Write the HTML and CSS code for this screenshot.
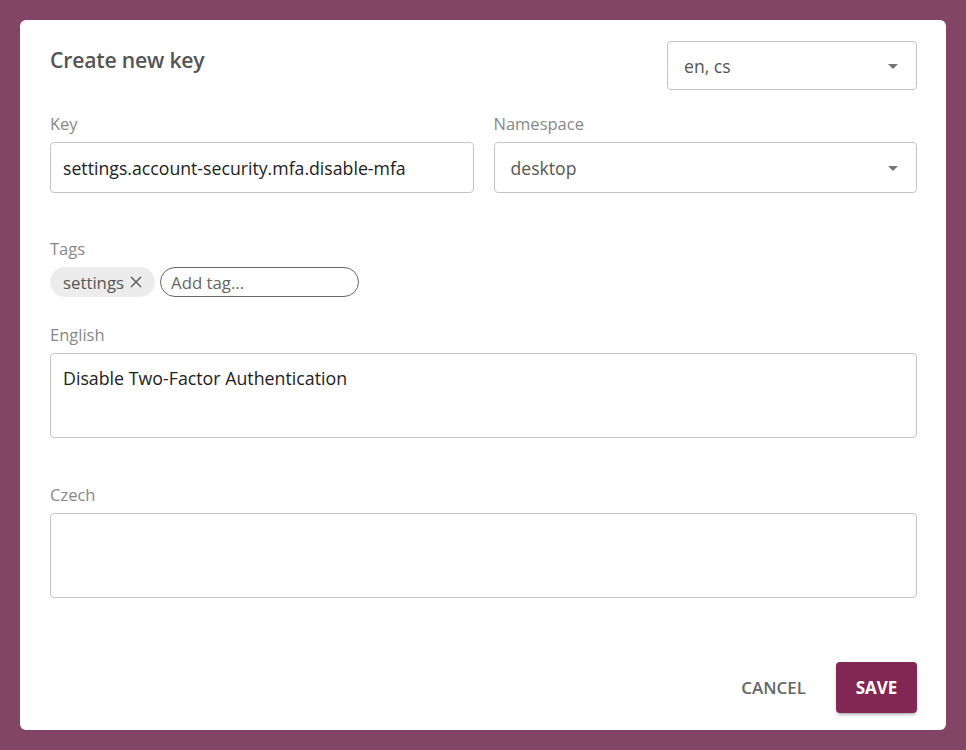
FILE: index.html
```html
<!DOCTYPE html>
<html>
<head>
<meta charset="utf-8">
<link rel="stylesheet" href="styles.css">
</head>
<body>
<div class="dialog">
  <div class="header">
    <h2 class="title">Create new key</h2>
    <div class="select lang">
      <span>en, cs</span>
      <svg class="arrow" width="24" height="24" viewBox="0 0 24 24"><path d="M7 10l5 5 5-5z" fill="#757575"/></svg>
    </div>
  </div>
  <div class="row">
    <div class="field">
      <div class="label">Key</div>
      <div class="input">settings.account-security.mfa.disable-mfa</div>
    </div>
    <div class="field">
      <div class="label">Namespace</div>
      <div class="select ns">
        <span>desktop</span>
        <svg class="arrow" width="24" height="24" viewBox="0 0 24 24"><path d="M7 10l5 5 5-5z" fill="#757575"/></svg>
      </div>
    </div>
  </div>
  <div class="tags-block">
    <div class="label">Tags</div>
    <div class="tags">
      <span class="chip">settings <svg width="14" height="14" viewBox="0 0 14 14"><path d="M2 2L12 12M12 2L2 12" stroke="#555" stroke-width="1.4"/></svg></span>
      <span class="tag-input">Add tag...</span>
    </div>
  </div>
  <div class="trans">
    <div class="label">English</div>
    <div class="textarea">Disable Two-Factor Authentication</div>
  </div>
  <div class="trans czech">
    <div class="label">Czech</div>
    <div class="textarea"></div>
  </div>
  <div class="actions">
    <span class="cancel">CANCEL</span>
    <span class="save">SAVE</span>
  </div>
</div>
</body>
</html>
```
FILE: styles.css
```css
* { box-sizing: border-box; }
html, body { margin: 0; padding: 0; }
body {
  background: #834565;
  width: 966px;
  height: 750px;
  padding: 20px;
  font-family: "Open Sans", "Noto Sans", sans-serif;
  color: #333;
}
.dialog {
  background: #fff;
  border-radius: 6px;
  width: 926px;
  height: 710px;
  padding: 21px 29px 0 30px;
  display: flex;
  flex-direction: column;
}
.header {
  display: flex;
  justify-content: space-between;
  align-items: flex-start;
}
.title {
  margin: 0;
  padding-top: 4px;
  font-size: 21.2px;
  font-weight: 600;
  color: #555;
  letter-spacing: -0.2px;
}
.select {
  border: 1px solid #c4c4c4;
  border-radius: 4px;
  display: flex;
  align-items: center;
  justify-content: space-between;
  padding: 0 11px 0 16px;
  font-size: 17.6px;
  color: #555;
}
.lang { width: 250px; height: 49px; }
.ns { height: 51px; }
.arrow { flex: none; }
.row {
  display: grid;
  grid-template-columns: 1fr 1fr;
  gap: 20px;
  margin-top: 23px;
}
.label {
  font-size: 16.5px;
  color: #888;
  line-height: 22px;
  margin-bottom: 7px;
}
.input {
  border: 1px solid #c4c4c4;
  border-radius: 4px;
  height: 51px;
  display: flex;
  align-items: center;
  padding: 0 12px;
  font-size: 17.7px;
  color: #222;
  white-space: nowrap;
}
.tags-block { margin-top: 45px; }
.tags-block .label { margin-bottom: 7px; }
.tags { display: flex; gap: 5px; align-items: center; }
.chip {
  background: #ececec;
  border-radius: 15px;
  height: 30px;
  padding: 0 12px 0 13px;
  display: flex;
  align-items: center;
  gap: 5px;
  font-size: 16.8px;
  color: #555;
}
.tag-input {
  border: 1px solid #666;
  border-radius: 15px;
  width: 199px;
  height: 30px;
  display: flex;
  align-items: center;
  padding: 0 10px;
  font-size: 16.8px;
  color: #666;
}
.trans { margin-top: 27px; }
.trans.czech { margin-top: 46px; }
.textarea {
  border: 1px solid #c4c4c4;
  border-radius: 4px;
  height: 85px;
  padding: 12px 12px;
  font-size: 17.8px;
  color: #222;
  line-height: 24px;
}
.actions {
  margin-top: 64px;
  display: flex;
  justify-content: flex-end;
  align-items: center;
  gap: 30px;
}
.cancel {
  font-size: 17px;
  font-weight: 600;
  color: #666;
}
.save {
  background: #822753;
  color: #fff;
  font-size: 17px;
  font-weight: 700;
  border-radius: 4px;
  width: 81px;
  height: 51px;
  display: flex;
  align-items: center;
  justify-content: center;
  box-shadow: 0 3px 3px -2px rgba(0,0,0,0.25), 0 2px 4px rgba(0,0,0,0.15);
}
```
